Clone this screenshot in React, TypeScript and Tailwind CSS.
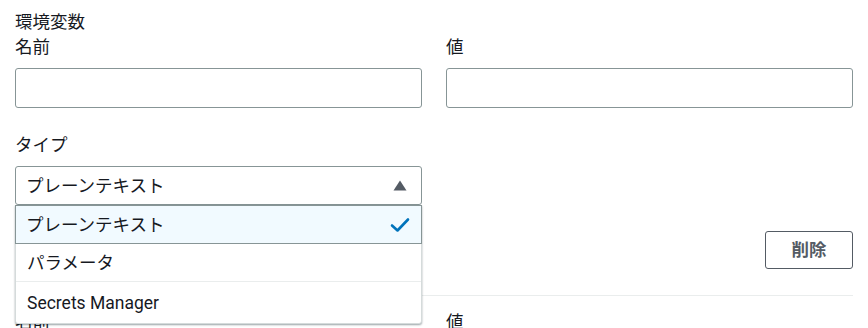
const font = { fontFamily: '"Roboto", "Noto Sans CJK JP", sans-serif' }

const Check = () => (
    <svg width="20" height="16" viewBox="0 0 20 16" fill="none">
        <path d="M2 8.5 L7.5 13.5 L18 2.5" stroke="#0073bb" strokeWidth="2.6" strokeLinecap="round" strokeLinejoin="round" />
    </svg>
)

export default function App() {
    return (
        <div className="w-[868px] h-[328px] overflow-hidden bg-white px-[15px] text-[17.5px] leading-[22px] text-[#16191f]" style={font}>
            <div className="pt-[11px] w-[838px]">
                {/* Section title */}
                <div>環境変数</div>

                {/* Name / value */}
                <div className="grid grid-cols-2 gap-x-[24px] mt-[3px]">
                    <div>
                        <div>名前</div>
                        <input className="mt-[10px] w-full h-[40px] border border-[#879596] rounded-[3px] bg-white px-[10px] outline-none" />
                    </div>
                    <div>
                        <div>値</div>
                        <input className="mt-[10px] w-full h-[40px] border border-[#879596] rounded-[3px] bg-white px-[10px] outline-none" />
                    </div>
                </div>

                {/* Type */}
                <div className="grid grid-cols-2 gap-x-[24px] mt-[26px]">
                    <div>
                        <div>タイプ</div>
                        <div className="relative mt-[10px]">
                            <div className="h-[39px] border border-[#879596] rounded-[3px] flex items-center justify-between pl-[10px] pr-[14px]">
                                <span>プレーンテキスト</span>
                                <svg width="14" height="11" viewBox="0 0 14 11">
                                    <path d="M7 0.5 L13.5 10.5 L0.5 10.5 Z" fill="#545b64" />
                                </svg>
                            </div>

                            {/* Open dropdown */}
                            <div className="absolute left-0 right-0 top-[39px] z-10 bg-white border border-[#d5dbdb] rounded-b-[3px] shadow-[0_1px_2px_rgba(0,28,36,0.4)]">
                                <div className="h-[39px] flex items-center justify-between pl-[10px] pr-[11px] bg-[#f1faff] border border-[#879596] -mx-px -mt-px">
                                    <span>プレーンテキスト</span>
                                    <Check />
                                </div>
                                <div className="h-[38px] flex items-center pl-[11px] border-b border-[#eaeded]">パラメータ</div>
                                <div className="h-[41px] flex items-center pl-[11px]">Secrets Manager</div>
                            </div>
                        </div>
                    </div>
                    <div />
                </div>

                {/* Remove button */}
                <div className="flex justify-end mt-[26px]">
                    <button className="w-[88px] h-[38px] border border-[#545b64] rounded-[3px] text-[#545b64] font-bold bg-white">削除</button>
                </div>

                <div className="mt-[26px] border-t border-[#eaeded]" />

                <div className="grid grid-cols-2 gap-x-[24px] mt-[15px]">
                    <div>名前</div>
                    <div>値</div>
                </div>
            </div>
        </div>
    )
}
